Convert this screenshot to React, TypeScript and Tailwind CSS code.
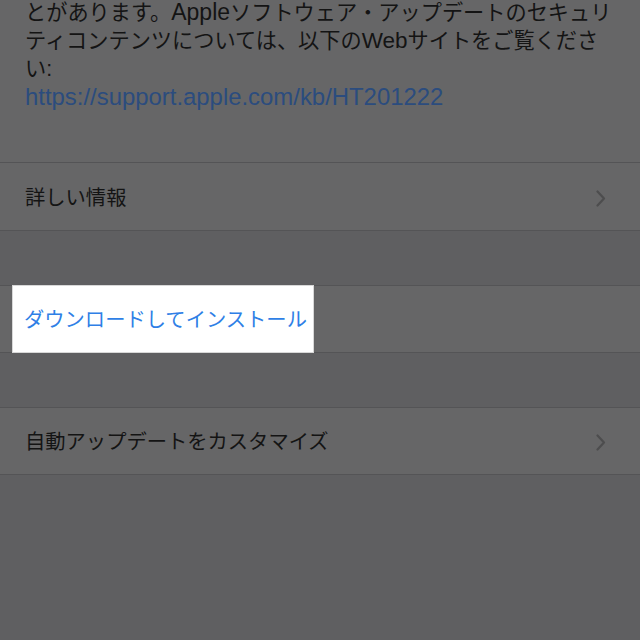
import React from "react";

const font = { fontFamily: '"Liberation Sans", "Noto Sans CJK JP", sans-serif' };

function Chevron() {
  return (
    <svg width="10" height="17" viewBox="0 0 10 17" className="shrink-0">
      <polyline points="1.5,1.5 8,8.5 1.5,15.5" fill="none" stroke="#4d4d4e" strokeWidth="2.2" strokeLinecap="round" strokeLinejoin="round" />
    </svg>
  );
}

export default function App() {
  return (
    <div className="w-[640px] h-[640px] overflow-hidden bg-[#5f5f61] text-[#141414]" style={font}>
      <div className="h-[163px] bg-[#666667] border-b border-[#545456] pl-[25px] overflow-hidden">
        <div className="-mt-[2px] text-[21.2px] leading-[28px] whitespace-nowrap">
          <div>とがあります。<span className="text-[23px]">Apple</span>ソフトウェア・アップデートのセキュリ</div>
          <div>ティコンテンツについては、以下の<span className="text-[22.5px]">Web</span>サイトをご覧くださ</div>
          <div>い:</div>
          <div className="text-[23.9px] text-[#2b4c7e]">https://support.apple.com/kb/HT201222</div>
        </div>
      </div>
      <div className="h-[68px] bg-[#666667] border-b border-[#545456] flex items-center justify-between pl-[25px] pr-[34px] pt-[3px]">
        <span className="text-[20.3px]">詳しい情報</span>
        <Chevron />
      </div>
      <div className="h-[54px]" />
      <div className="h-[68px] bg-[#666667] border-y border-[#545456] flex items-stretch pl-[13px]">
        <div className="w-[300px] bg-white flex items-center pl-[11px] pt-[3px] shadow-[0_0_0_1px_#d8d8d8]">
          <span className="text-[20.3px] text-[#2f7fe6]">ダウンロードしてインストール</span>
        </div>
      </div>
      <div className="h-[54px]" />
      <div className="h-[68px] bg-[#666667] border-y border-[#545456] flex items-center justify-between pl-[25px] pr-[34px] pt-[3px]">
        <span className="text-[20.3px]">自動アップデートをカスタマイズ</span>
        <Chevron />
      </div>
    </div>
  );
}
